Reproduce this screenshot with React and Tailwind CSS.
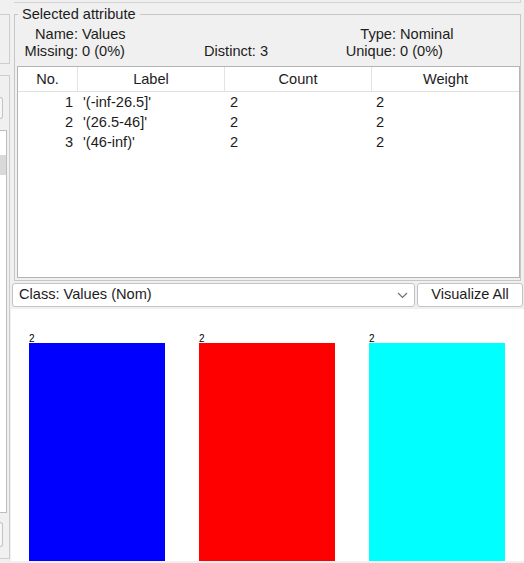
const rows = [
  { no: 1, label: "'(-inf-26.5]'", count: 2, weight: 2 },
  { no: 2, label: "'(26.5-46]'", count: 2, weight: 2 },
  { no: 3, label: "'(46-inf)'", count: 2, weight: 2 },
]

const bars = [
  { value: 2, color: 'bg-[#0000ff]' },
  { value: 2, color: 'bg-[#ff0000]' },
  { value: 2, color: 'bg-[#00ffff]' },
]

const LeftStrip = () => (
  <div className="flex w-[10px] shrink-0 flex-col">
    <div className="h-[14px]" />
    <div className="h-[50px] border-y border-r border-[#cdcdcd]" />
    <div className="h-[11px]" />
    <div className="flex h-[484px] flex-col border-y border-r border-[#cdcdcd]">
      <div className="mt-[21px] h-[22px] w-[3px] rounded-r border-y border-r border-[#c2c2c2] bg-[#f6f6f6]" />
      <div className="mt-[11px] h-[383px] w-[7px] border-y border-r border-[#bdbdbd] bg-white">
        <div className="mt-[24px] h-[20px] bg-[#d9d9d9]" />
      </div>
      <div className="mt-[9px] h-[25px] w-[3px] rounded-r border-y border-r border-[#c2c2c2] bg-[#f6f6f6]" />
    </div>
  </div>
)

const InfoRow = ({ label, value, extra, label2, value2 }) => (
  <div className="flex h-[17px] items-center whitespace-nowrap leading-[17px]">
    <span className="w-[61px] text-right">{label}</span>
    <span className="w-[126px] pl-[4px]">{value}</span>
    <span className="w-[140px]">{extra}</span>
    <span className="w-[52px] text-right">{label2}</span>
    <span className="pl-[4px]">{value2}</span>
  </div>
)

const AttributeTable = () => (
  <div className="mt-[6px] h-[212px] border border-[#b4b4b4] bg-white">
    <div className="flex h-[25px] border-b border-[#e0e0e0] leading-[24px]">
      <div className="w-[60px] border-r border-[#e3e3e3] text-center">No.</div>
      <div className="w-[147px] border-r border-[#e3e3e3] text-center">Label</div>
      <div className="w-[147px] border-r border-[#e3e3e3] text-center">Count</div>
      <div className="flex-1 text-center">Weight</div>
    </div>
    {rows.map((row) => (
      <div key={row.no} className="flex h-[20px] leading-[20px]">
        <div className="w-[60px] pr-[5px] text-right">{row.no}</div>
        <div className="w-[147px] pl-[5px]">{row.label}</div>
        <div className="w-[147px] pl-[5px]">{row.count}</div>
        <div className="flex-1 pl-[4px]">{row.weight}</div>
      </div>
    ))}
  </div>
)

export default function App() {
  return (
    <div className="flex h-[563px] w-[524px] overflow-hidden bg-[#f0f0f0] font-['Liberation_Sans',Arial,sans-serif] text-[14.6px] text-[#1c1c1c]">
      <LeftStrip />
      <div className="flex min-w-0 flex-1 flex-col">
        <div className="ml-[4px] mr-[3px] h-[3px] border-b border-r border-[#d2d2d2]" />

        <fieldset className="ml-[4px] mr-[3px] mt-[3px] border border-[#c6c6c6] pb-[2px] pl-[2px]">
          <legend className="ml-[1px] px-[4px] leading-4">Selected attribute</legend>
          <div className="mt-[4px]">
            <InfoRow label="Name:" value="Values" label2="Type:" value2="Nominal" />
            <InfoRow label="Missing:" value="0 (0%)" extra="Distinct: 3" label2="Unique:" value2="0 (0%)" />
          </div>
          <AttributeTable />
        </fieldset>

        <div className="ml-[2px] mr-[1px] mt-[2px] flex h-[24px] gap-[2px]">
          <div className="flex flex-1 items-center justify-between rounded-[3px] border border-[#c4c4c4] bg-white pl-[6px] pr-[6px]">
            <span>Class: Values (Nom)</span>
            <svg width="11" height="7" viewBox="0 0 11 7" fill="none">
              <polyline points="1,1 5.5,5.5 10,1" stroke="#707070" strokeWidth="1.2" />
            </svg>
          </div>
          <button className="w-[106px] rounded-[3px] border border-[#c4c4c4] bg-white">Visualize All</button>
        </div>

        <div className="ml-[1px] mt-[2px] flex h-[252px] items-end gap-[34px] bg-white pl-[18px]">
          {bars.map((bar, i) => (
            <div key={i} className="flex w-[136px] flex-col">
              <span className="h-[9px] text-[10px] leading-[9px] text-black">{bar.value}</span>
              <div className={`h-[218px] ${bar.color}`} />
            </div>
          ))}
        </div>
      </div>
    </div>
  )
}
